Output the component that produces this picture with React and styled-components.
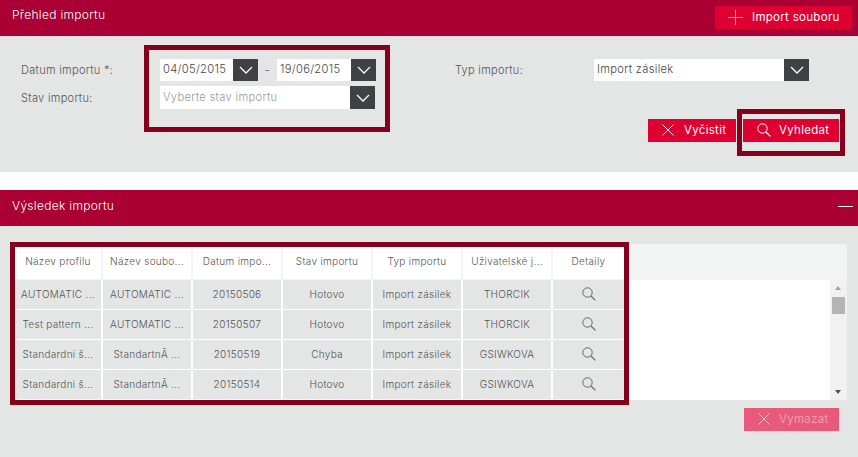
import React from 'react';
import styled, { createGlobalStyle } from 'styled-components';

const GlobalStyle = createGlobalStyle`
    html, body {
        margin: 0;
        padding: 0;
        background: #fff;
    }
    body {
        font-family: Inter, "Open Sans", "Liberation Sans", sans-serif;
        font-weight: 300;
        font-size: 11px;
        letter-spacing: 0.3px;
        color: #444;
    }
    * {
        box-sizing: border-box;
    }
`;

const Page = styled.div`
    position: relative;
    width: 858px;
    height: 457px;
    overflow: hidden;
`;

const Header = styled.div`
    height: 36px;
    background: #aa0033;
    color: #fff;
    font-size: 12px;
    display: flex;
    justify-content: space-between;
    padding: ${(props) => props.$pad || '0 6px 0 12px'};
`;

const HeaderTitle = styled.div`
    padding-top: ${(props) => props.$top}px;
`;

const Panel = styled.div`
    background: #e4e5e5;
    height: ${(props) => props.$height}px;
`;

const Filter = styled(Panel)`
    padding: 23px 19px 0 21px;
`;

const FormRow = styled.div`
    display: flex;
`;

const FormLeft = styled.div`
    width: 434px;
    display: grid;
    grid-template-columns: 139px 216px;
    row-gap: 5px;
    align-items: center;
`;

const FormRight = styled.div`
    display: grid;
    grid-template-columns: 139px 215px;
    align-items: center;
    align-self: flex-start;
`;

const Label = styled.div`
    color: #555;
`;

const DateRange = styled.div`
    display: flex;
    align-items: center;
`;

const Dash = styled.div`
    width: 19px;
    text-align: center;
`;

const Select = styled.div`
    display: flex;
    width: ${(props) => props.$width}px;
    height: ${(props) => props.$height || 22}px;
    background: #fff;
`;

const SelectValue = styled.div`
    flex: 1;
    padding-left: 3px;
    font-size: 11.2px;
    line-height: ${(props) => (props.$height || 22) - 1}px;
    color: ${(props) => (props.$placeholder ? '#999' : '#444')};
    white-space: nowrap;
    overflow: hidden;
`;

const SelectArrow = styled.div`
    width: 25px;
    background: #404142;
    display: flex;
    align-items: center;
    justify-content: center;
`;

const Actions = styled.div`
    display: flex;
    justify-content: flex-end;
    gap: 7px;
    margin-top: 10px;
`;

const Button = styled.div`
    display: flex;
    align-items: center;
    height: 23px;
    width: ${(props) => props.$width}px;
    padding-left: ${(props) => props.$left || 14}px;
    padding-bottom: 1px;
    gap: ${(props) => props.$gap || 9}px;
    background: ${(props) => (props.$disabled ? '#e75a7b' : '#dd0031')};
    color: ${(props) => (props.$disabled ? '#f09bb0' : '#fff')};
    font-weight: 400;
    font-size: 11.5px;
`;

const HeaderButton = styled(Button)`
    margin-top: 6px;
`;

const Gap = styled.div`
    height: 18px;
`;

const Results = styled(Panel)`
    padding: 18px 11px 0 15px;
`;

const TableBox = styled.div`
    position: relative;
    height: 156px;
    background: #fff;
`;

const HeadBand = styled.div`
    height: 36px;
    background: #f3f4f4;
`;

const Table = styled.div`
    position: absolute;
    top: 3px;
    left: 0;
    display: grid;
    grid-template-columns: 86px 88px 88px 88px 88px 88px 71px;
    grid-template-rows: 32px repeat(4, 29px);
    column-gap: 2px;
    row-gap: 1px;
    width: 609px;
    font-size: 10px;
`;

const HeadCell = styled.div`
    background: #fff;
    display: flex;
    align-items: center;
    justify-content: center;
    padding-bottom: 4px;
    color: #555;
    white-space: nowrap;
`;

const Cell = styled.div`
    background: #e4e5e5;
    display: flex;
    align-items: center;
    justify-content: center;
    padding-bottom: 1px;
    white-space: nowrap;
    color: #555;
`;

const Scrollbar = styled.div`
    position: absolute;
    right: 0;
    top: 36px;
    bottom: 0;
    width: 17px;
    background: #f1f1f1;
`;

const ScrollArrow = styled.div`
    position: absolute;
    left: 5px;
    ${(props) => (props.$up ? 'top: 6px;' : 'bottom: 6px;')}
    width: 0;
    height: 0;
    border-left: 3.5px solid transparent;
    border-right: 3.5px solid transparent;
    ${(props) =>
        props.$up
            ? 'border-bottom: 4px solid #a3a3a3;'
            : 'border-top: 4px solid #505050;'}
`;

const ScrollThumb = styled.div`
    position: absolute;
    top: 17px;
    left: 2px;
    width: 13px;
    height: 17px;
    background: #b4b4b4;
`;

const ResultActions = styled.div`
    display: flex;
    justify-content: flex-end;
    padding-right: 8px;
    margin-top: 8px;
`;

const Collapse = styled.div`
    width: 15px;
    height: 1px;
    background: #fff;
    margin: 16px 0 0;
`;

const Highlight = styled.div`
    position: absolute;
    left: ${(props) => props.$x}px;
    top: ${(props) => props.$y}px;
    width: ${(props) => props.$w}px;
    height: ${(props) => props.$h}px;
    border: 5px solid #85001a;
    pointer-events: none;
`;

function Chevron() {
    return (
        <svg width="16" height="10" viewBox="0 0 16 10" fill="none">
            <path d="M2 2l6 6 6-6" stroke="#fff" strokeWidth="1.3" />
        </svg>
    );
}

function PlusIcon() {
    return (
        <svg width="15" height="15" viewBox="0 0 15 15" fill="none">
            <path d="M7.5 0v15M0 7.5h15" stroke="#f7a0b4" strokeWidth="1" />
        </svg>
    );
}

function CrossIcon({ color = '#fff' }) {
    return (
        <svg width="12" height="12" viewBox="0 0 12 12" fill="none">
            <path d="M0.5 0.5l11 11M11.5 0.5l-11 11" stroke={color} strokeWidth="1" />
        </svg>
    );
}

function SearchIcon({ color = '#fff' }) {
    return (
        <svg width="14" height="14" viewBox="0 0 14 14" fill="none">
            <circle cx="5.5" cy="5.5" r="4.7" stroke={color} strokeWidth="1" />
            <path d="M9 9l4.4 4.4" stroke={color} strokeWidth="1.2" />
        </svg>
    );
}

const columns = [
    'Název profilu',
    'Název soubo...',
    'Datum impo...',
    'Stav importu',
    'Typ importu',
    'Uživatelské j...',
    'Detaily',
];

const rows = [
    ['AUTOMATIC ...', 'AUTOMATIC ...', '20150506', 'Hotovo', 'Import zásilek', 'THORCIK'],
    ['Test pattern ...', 'AUTOMATIC ...', '20150507', 'Hotovo', 'Import zásilek', 'THORCIK'],
    ['Standardni š...', 'StandartnÃ ...', '20150519', 'Chyba', 'Import zásilek', 'GSIWKOVA'],
    ['Standardni š...', 'StandartnÃ ...', '20150514', 'Hotovo', 'Import zásilek', 'GSIWKOVA'],
];

export default function App() {
    return (
        <Page>
            <GlobalStyle />
            <Header>
                <HeaderTitle $top={7}>Přehled importu</HeaderTitle>
                <HeaderButton $width={137} $gap={9} $left={13}>
                    <PlusIcon />
                    Import souboru
                </HeaderButton>
            </Header>
            <Filter $height={136}>
                <FormRow>
                    <FormLeft>
                        <Label>Datum importu *:</Label>
                        <DateRange>
                            <Select $width={98}>
                                <SelectValue>04/05/2015</SelectValue>
                                <SelectArrow>
                                    <Chevron />
                                </SelectArrow>
                            </Select>
                            <Dash>-</Dash>
                            <Select $width={99}>
                                <SelectValue>19/06/2015</SelectValue>
                                <SelectArrow>
                                    <Chevron />
                                </SelectArrow>
                            </Select>
                        </DateRange>
                        <Label>Stav importu:</Label>
                        <Select $width={215} $height={23}>
                            <SelectValue $placeholder $height={23}>
                                Vyberte stav importu
                            </SelectValue>
                            <SelectArrow>
                                <Chevron />
                            </SelectArrow>
                        </Select>
                    </FormLeft>
                    <FormRight>
                        <Label>Typ importu:</Label>
                        <Select $width={215}>
                            <SelectValue>Import zásilek</SelectValue>
                            <SelectArrow>
                                <Chevron />
                            </SelectArrow>
                        </Select>
                    </FormRight>
                </FormRow>
                <Actions>
                    <Button $width={88} $gap={10}>
                        <CrossIcon />
                        Vyčistit
                    </Button>
                    <Button $width={96} $gap={8}>
                        <SearchIcon />
                        Vyhledat
                    </Button>
                </Actions>
            </Filter>
            <Gap />
            <Header $pad="0 5px 0 12px">
                <HeaderTitle $top={8}>Výsledek importu</HeaderTitle>
                <Collapse />
            </Header>
            <Results $height={231}>
                <TableBox>
                    <HeadBand />
                    <Table>
                        {columns.map((name) => (
                            <HeadCell key={name}>{name}</HeadCell>
                        ))}
                        {rows.map((row, i) => (
                            <React.Fragment key={i}>
                                {row.map((value, j) => (
                                    <Cell key={j}>{value}</Cell>
                                ))}
                                <Cell>
                                    <SearchIcon color="#666" />
                                </Cell>
                            </React.Fragment>
                        ))}
                    </Table>
                    <Scrollbar>
                        <ScrollArrow $up />
                        <ScrollThumb />
                        <ScrollArrow />
                    </Scrollbar>
                </TableBox>
                <ResultActions>
                    <Button $width={95} $disabled>
                        <CrossIcon color="#f9c3d0" />
                        Vymazat
                    </Button>
                </ResultActions>
            </Results>
            <Highlight $x={144} $y={45} $w={246} $h={87} />
            <Highlight $x={737} $y={109} $w={108} $h={47} />
            <Highlight $x={10} $y={242} $w={619} $h={163} />
        </Page>
    );
}
